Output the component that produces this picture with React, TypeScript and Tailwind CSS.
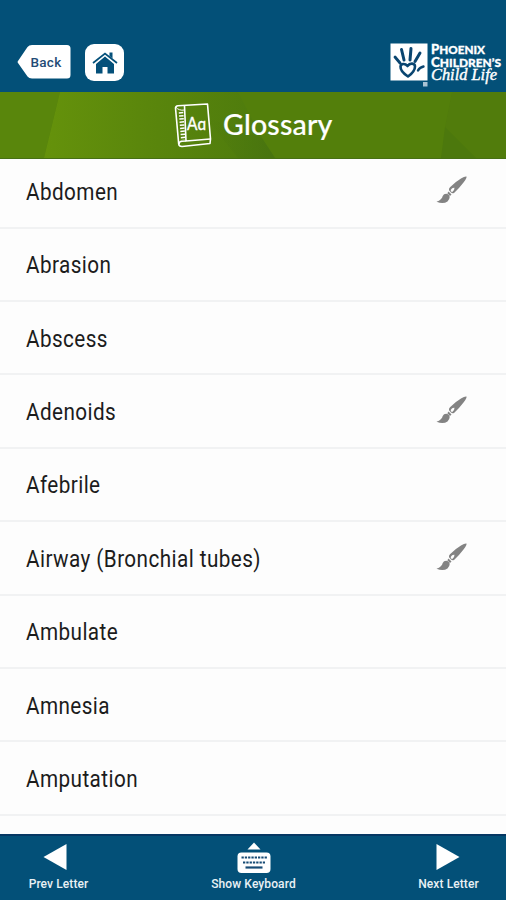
import { Fragment } from 'react'

type Term = {
  name: string
  drawing?: boolean
}

const terms: Term[] = [
  { name: 'Abdomen', drawing: true },
  { name: 'Abrasion' },
  { name: 'Abscess' },
  { name: 'Adenoids', drawing: true },
  { name: 'Afebrile' },
  { name: 'Airway (Bronchial tubes)', drawing: true },
  { name: 'Ambulate' },
  { name: 'Amnesia' },
  { name: 'Amputation' },
]

const HandIcon = () => (
  <svg width="38" height="44" viewBox="0 0 38 44">
    <rect x="0.5" y="0.5" width="37" height="37" fill="#fff" />
    <g
      fill="none"
      stroke="#0a4570"
      strokeLinecap="round"
      strokeLinejoin="round"
    >
      <path
        d="M18 33.500C13.500 30.500 10.300 27 10.500 23.500C10.800 20.500 15 20 17.500 23C20 19.500 25 20 25 23.500C25 27.500 21.500 31 18 33.500Z"
        strokeWidth="2.600"
      />
      <path d="M5 14L10 20" strokeWidth="2.800" />
      <path d="M11.500 6.500L14 17" strokeWidth="3" />
      <path d="M21 5.500L20 17" strokeWidth="3" />
      <path d="M30 10L25 18.500" strokeWidth="3" />
      <path d="M28 27.500Q29.500 24.500 33.500 23.500" strokeWidth="2.400" />
    </g>
    <rect x="33" y="39" width="4.500" height="4.500" fill="#a9c3d4" />
  </svg>
)

const HomeIcon = () => (
  <svg width="26" height="22" viewBox="0 0 26 22" fill="#04507a">
    <path d="M4 12L13 4.500L22 12V21.500H15.500V15H10.500V21.500H4Z" />
    <path d="M17.500 0.500H20.500V6.500L17.500 4Z" />
    <path
      d="M1 11L13 1.500L25 11"
      fill="none"
      stroke="#04507a"
      strokeWidth="1.700"
    />
  </svg>
)

const BookIcon = () => (
  <svg width="38" height="46" viewBox="0 0 38 46" fill="none">
    <g stroke="#fff" strokeWidth="1.600" strokeLinejoin="round">
      <path d="M1.500 5Q1.500 3 4 2.700L33.500 1L36.500 36L36 40.500L8 43.500Q5 43.500 4.700 41Z" />
      <path d="M10.500 3L12 38L36.500 36" />
      <path d="M5 41Q5 38.500 8 38.300L12 38" />
      <path d="M1.700 4Q5 8 10.500 7" strokeWidth="1" />
    </g>
    <path
      d="M7 9L9.300 37"
      stroke="#fff"
      strokeWidth="4.500"
      strokeDasharray="1.500 1.600"
    />
    <text
      x="13"
      y="26.500"
      fill="#fff"
      stroke="#fff"
      strokeWidth="0.400"
      fontSize="17"
      fontFamily="Lato, sans-serif"
      textLength="19"
      lengthAdjust="spacingAndGlyphs"
    >
      A&#593;
    </text>
  </svg>
)

const BrushIcon = () => (
  <svg width="32" height="28" viewBox="0 0 32 28" fill="#838383">
    <path
      fillRule="evenodd"
      d="M30.500 0.500Q31 2 27.500 6.500Q23 12.500 18.300 16.700Q16.500 18 15 16.500L13 14.300Q12.500 13 14 11.300Q19 6 25 2.500Q29 0 30.500 0.500ZM18.500 11.800Q16 11.500 14.700 14Q14.500 16 16.300 16Q18.500 15 18.500 11.800Z"
    />
    <path d="M12.500 15.500L15.500 18.500L14 20L11.300 17.300Z" />
    <path d="M11.500 18Q8 17.200 6.700 20Q6 23.800 0.500 25.700Q7 28.500 11.500 25.500Q14.500 22.500 13.300 19.500Z" />
  </svg>
)

const KeyboardIcon = () => (
  <svg width="34" height="32" viewBox="0 0 34 32">
    <path d="M17 0.500L23.500 7.500H10.500Z" fill="#fff" />
    <rect x="0.500" y="10.500" width="33" height="20.500" rx="4" fill="#fff" />
    <g stroke="#164b75" strokeWidth="2.200">
      <path d="M4.500 15.500H30" strokeDasharray="2.300 1" />
      <path d="M6 20.500H28" strokeDasharray="2.300 1" />
      <path d="M8.500 25.500H25.500" />
    </g>
  </svg>
)

const Header = () => (
  <header className="flex h-[92px] items-start justify-between bg-[#035078] pl-[17px] pt-[43px]">
    <div className="flex items-start">
      <button className="relative mt-px h-[36px] w-[54px]">
        <svg
          className="absolute inset-0"
          width="54"
          height="36"
          viewBox="0 0 54 36"
        >
          <path
            d="M1 17L10.500 3Q12 1 15 1H50Q53.500 1 53.500 4.500V31Q53.500 34.500 50 34.500H15Q12 34.500 10.500 32.500L1 19Q0 18 1 17Z"
            fill="#fff"
          />
        </svg>
        <span className="relative block pl-1 text-center font-['Roboto',sans-serif] text-[13.500px] font-medium leading-[36px] tracking-[0.300px] text-[#234b75]">
          Back
        </span>
      </button>
      <button className="ml-[14px] mt-px flex h-[37px] w-[39px] items-center justify-center rounded-[9px] bg-white">
        <HomeIcon />
      </button>
    </div>
    <div className="flex items-start gap-[3px] pr-[3px]">
      <HandIcon />
      <svg
        className="overflow-visible"
        width="72"
        height="42"
        viewBox="0 0 72 42"
        fill="#fff"
      >
        <g
          fontFamily="Lato, sans-serif"
          fontWeight="900"
          stroke="#fff"
          strokeWidth="0.300"
        >
          <text x="0" y="10.500" fontSize="13" textLength="54" lengthAdjust="spacingAndGlyphs">
            P<tspan fontSize="11.500">HOENIX</tspan>
          </text>
          <text x="0" y="23.500" fontSize="13" textLength="70" lengthAdjust="spacingAndGlyphs">
            C<tspan fontSize="11.500">HILDREN’S</tspan>
          </text>
        </g>
        <text
          x="0"
          y="37"
          fontFamily="'Liberation Serif', serif"
          fontStyle="italic"
          fontSize="16"
          stroke="#fff"
          strokeWidth="0.400"
          textLength="66"
          lengthAdjust="spacingAndGlyphs"
        >
          Child Life
        </text>
      </svg>
    </div>
  </header>
)

const Banner = () => (
  <div className="relative flex h-[67px] items-start border-b border-[#477015] bg-[#537f0b] pl-[174px] pt-[11px]">
    <svg
      className="absolute inset-0"
      width="506"
      height="66"
      viewBox="0 0 506 66"
    >
      <defs>
        <linearGradient id="leaf">
          <stop offset="0" stopColor="#65920b" />
          <stop offset="0.450" stopColor="#5a860c" />
          <stop offset="1" stopColor="#4d7a0d" />
        </linearGradient>
        <linearGradient id="fold">
          <stop offset="0" stopColor="#4d790e" stopOpacity="0" />
          <stop offset="1" stopColor="#48740f" />
        </linearGradient>
      </defs>
      <path d="M0 0H60L44 66H0Z" fill="#59860c" />
      <path d="M60 0H238L262 46L275 66H44Z" fill="url(#leaf)" />
      <path d="M205 25L262 46L275 66H238Z" fill="url(#fold)" />
      <path d="M452 0L445 35L476 66H506V0Z" fill="#517c0c" />
      <path d="M445 35L476 66H441Z" fill="#4c780d" />
    </svg>
    <div className="relative flex items-start">
      <BookIcon />
      <h1 className="ml-[11px] mt-[3px] font-['Lato',sans-serif] text-[28.500px] font-medium leading-9 tracking-[0.200px] text-white [-webkit-text-stroke:0.200px_white]">
        Glossary
      </h1>
    </div>
  </div>
)

const TermList = () => (
  <main className="h-[675px] overflow-hidden bg-[#fdfdfd]">
    <ul className="-mt-[3.800px]">
      {terms.map(({ name, drawing }) => (
        <li
          key={name}
          className="flex h-[73.400px] items-center justify-between border-b-2 border-[#f1f2f3] pl-[25.500px] pr-[38px]"
        >
          <span className="mt-[2px] origin-left scale-x-[0.862] whitespace-nowrap font-['Roboto',sans-serif] text-[24px] tracking-[0.500px] text-[#1c1c1c]">
            {name}
          </span>
          {drawing && (
            <div className="-mt-[2px]">
              <BrushIcon />
            </div>
          )}
        </li>
      ))}
    </ul>
  </main>
)

const labelStyle =
  "font-['Roboto',sans-serif] text-[12px] font-medium leading-4 tracking-[0.100px] text-[#e9f1f5]"

const Footer = () => (
  <footer className="flex h-[66px] items-start justify-between border-t-2 border-[#053763] bg-[#035078] pl-[28px] pr-[27px] pt-[6px]">
    <button className="flex w-[61px] flex-col items-center">
      <svg className="mr-[7px] h-[34px]" width="24" height="34">
        <path d="M0.500 15L23.500 2V28Z" fill="#fff" />
      </svg>
      <span className={`${labelStyle} whitespace-nowrap`}>Prev Letter</span>
    </button>
    <button className="flex w-[86px] flex-col items-center">
      <div className="h-[34px]">
        <KeyboardIcon />
      </div>
      <span className={`${labelStyle} whitespace-nowrap`}>Show Keyboard</span>
    </button>
    <button className="flex w-[61px] flex-col items-center">
      <svg className="mr-[1px] h-[34px]" width="24" height="34">
        <path d="M23.500 15L0.500 2V28Z" fill="#fff" />
      </svg>
      <span className={`${labelStyle} whitespace-nowrap`}>Next Letter</span>
    </button>
  </footer>
)

const App = () => (
  <Fragment>
    <div className="h-[900px] w-[506px] overflow-hidden">
      <Header />
      <Banner />
      <TermList />
      <Footer />
    </div>
  </Fragment>
)

export default App
